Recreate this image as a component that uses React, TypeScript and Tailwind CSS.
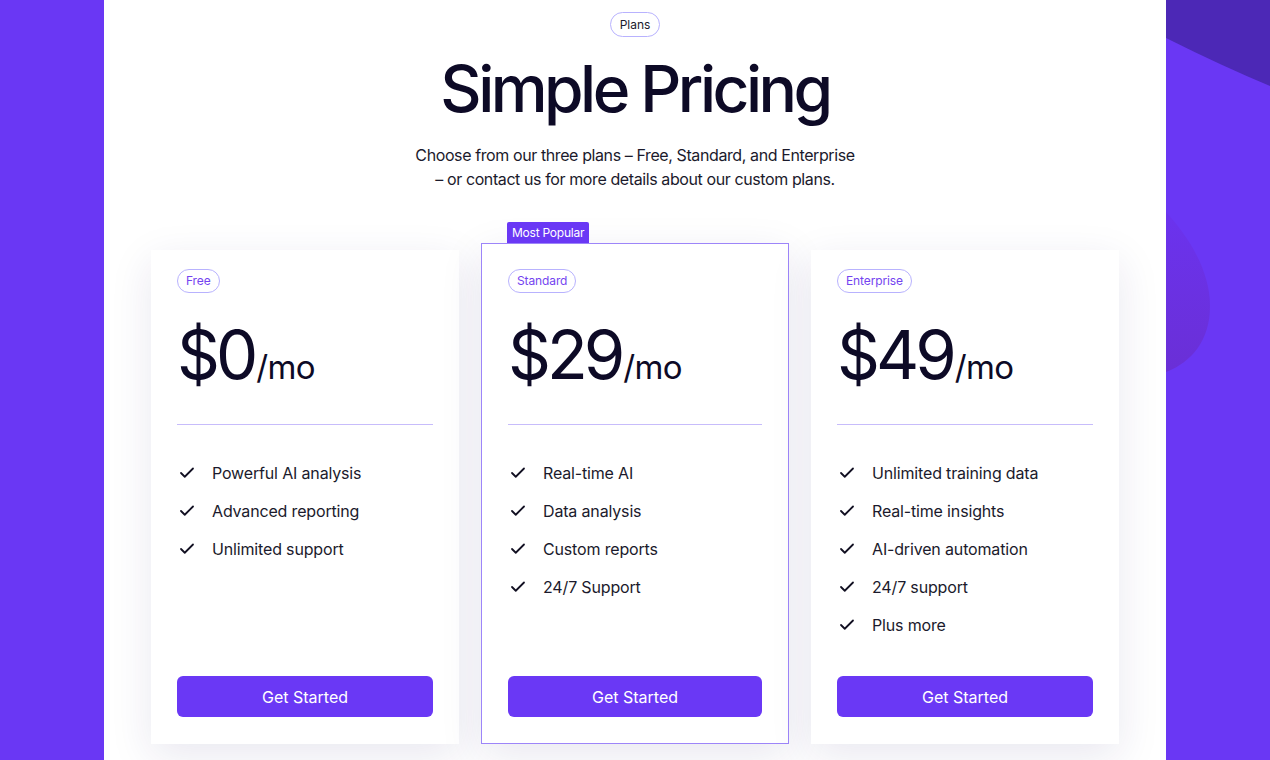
import React from 'react';
import { Check } from 'lucide-react';

type Plan = {
  name: string;
  price: string;
  features: string[];
  popular?: boolean;
};

const plans: Plan[] = [
  { name: 'Free', price: '$0', features: ['Powerful AI analysis', 'Advanced reporting', 'Unlimited support'] },
  { name: 'Standard', price: '$29', popular: true, features: ['Real-time AI', 'Data analysis', 'Custom reports', '24/7 Support'] },
  {
    name: 'Enterprise',
    price: '$49',
    features: ['Unlimited training data', 'Real-time insights', 'AI-driven automation', '24/7 support', 'Plus more'],
  },
];

const PlanCard: React.FC<{ plan: Plan }> = ({ plan }) => {
  const base = 'relative flex w-[308px] flex-col bg-white px-[26px] shadow-[0_12px_40px_rgba(40,30,110,0.10)]';
  return (
    <div
      className={
        plan.popular
          ? `${base} h-[501px] border border-[#9d85f9] pt-[25px] pb-[26px]`
          : `${base} h-[494px] pt-[19px] pb-[27px]`
      }
    >
      {plan.popular && (
        <div className="absolute -top-[22px] left-[25px] rounded-t-[2px] bg-[#6a38f5] px-[5px] py-[3px] text-[12px] leading-[15px] tracking-[-0.02em] text-white">
          Most Popular
        </div>
      )}
      <div className="self-start rounded-full border border-[#b8b2fe] px-[8px] text-[12px] leading-[22px] tracking-[-0.01em] text-[#7444f0]">
        {plan.name}
      </div>
      <div className="mt-[28px] flex items-baseline leading-none text-[#0d0a26]">
        <span className="text-[67px] tracking-[-0.06em]">{plan.price}</span>
        <span className="ml-[2px] text-[33px] tracking-[-0.02em]">/mo</span>
      </div>
      <div className="mt-[36px] h-px w-full bg-[#c7bcfb]" />
      <ul className="mt-[36px] flex flex-col gap-[14px]">
        {plan.features.map((f) => (
          <li key={f} className="flex items-center text-[16px] leading-6 tracking-[-0.01em] text-[#1b1a2c]">
            <Check className="ml-[1px] h-[18px] w-[18px] text-[#121022]" strokeWidth={2.4} />
            <span className="ml-[16px]">{f}</span>
          </li>
        ))}
      </ul>
      <button className="mt-auto h-[41px] w-full rounded-[6px] bg-[#6a38f5] text-[16px] text-white">
        Get Started
      </button>
    </div>
  );
};

export default function App() {
  return (
    <div
      className="relative h-[760px] w-full overflow-hidden bg-[#6a37f4]"
      style={{ fontFamily: 'Inter, "Liberation Sans", sans-serif' }}
    >
      <svg className="absolute left-[1166px] top-0 h-[760px] w-[104px]" viewBox="0 0 104 760">
        <defs>
          <linearGradient id="blob" x1="0" y1="0" x2="0" y2="1">
            <stop offset="0" stopColor="#6b33ee" />
            <stop offset="1" stopColor="#6a2fd6" />
          </linearGradient>
        </defs>
        <path d="M0 0 H104 V86 Q56 66 0 38 Z" fill="#4c28b6" />
        <path d="M0 212 C22 236 44 270 44 306 C44 340 26 362 0 372 Z" fill="url(#blob)" />
      </svg>

      <div className="relative ml-[104px] flex h-full w-[1062px] flex-col items-center bg-white pt-[12px]">
        <div className="rounded-full border border-[#b8b2fe] px-[9px] text-[12px] leading-[23px] text-[#1b1a2c]">
          Plans
        </div>
        <h1 className="mt-[20px] text-[64px] font-medium leading-none tracking-[-0.055em] text-[#0d0a26]">
          Simple Pricing
        </h1>
        <p className="mt-[22px] text-center text-[16px] leading-6 tracking-[-0.025em] text-[#1b1a2c]">
          Choose from our three plans – Free, Standard, and Enterprise
          <br />– or contact us for more details about our custom plans.
        </p>

        <div className="mt-[52px] flex items-end gap-[22px]">
          {plans.map((p) => (
            <PlanCard key={p.name} plan={p} />
          ))}
        </div>
      </div>
    </div>
  );
}
